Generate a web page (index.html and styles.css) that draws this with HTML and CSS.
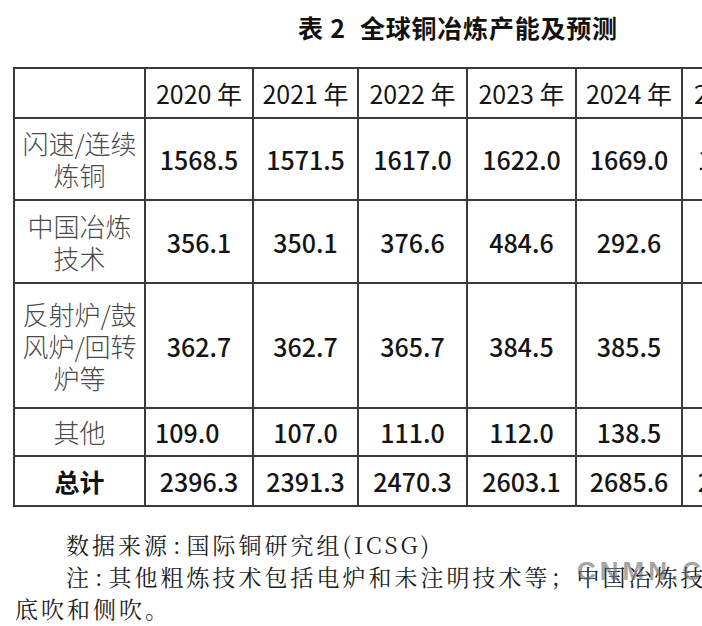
FILE: index.html
```html
<!DOCTYPE html>
<html lang="zh-CN">
<head>
<meta charset="utf-8">
<title>表 2 全球铜冶炼产能及预测</title>
<link rel="stylesheet" href="styles.css">
</head>
<body>
<div class="page">
  <h1 class="title"><span class="tno">表 2</span>全球铜冶炼产能及预测</h1>
  <table class="data">
    <colgroup>
      <col class="c-label">
      <col class="c-y1">
      <col class="c-y2">
      <col class="c-y3">
      <col class="c-y3">
      <col class="c-y4">
      <col class="c-y5">
      <col class="c-y5">
    </colgroup>
    <tr class="r-head">
      <th></th>
      <th>2020 年</th>
      <th>2021 年</th>
      <th>2022 年</th>
      <th>2023 年</th>
      <th>2024 年</th>
      <th>2025 年</th>
      <th>2026 年</th>
    </tr>
    <tr class="r-two">
      <td class="label">闪速/连续<br>炼铜</td>
      <td>1568.5</td>
      <td>1571.5</td>
      <td>1617.0</td>
      <td>1622.0</td>
      <td>1669.0</td>
      <td>1721.0</td>
      <td>1755.0</td>
    </tr>
    <tr class="r-two2">
      <td class="label">中国冶炼<br>技术</td>
      <td>356.1</td>
      <td>350.1</td>
      <td>376.6</td>
      <td>484.6</td>
      <td>292.6</td>
      <td>311.8</td>
      <td>322.4</td>
    </tr>
    <tr class="r-three">
      <td class="label">反射炉/鼓<br>风炉/回转<br>炉等</td>
      <td>362.7</td>
      <td>362.7</td>
      <td>365.7</td>
      <td>384.5</td>
      <td>385.5</td>
      <td>385.5</td>
      <td>385.5</td>
    </tr>
    <tr class="r-one">
      <td class="label">其他</td>
      <td class="left">109.0</td>
      <td>107.0</td>
      <td>111.0</td>
      <td>112.0</td>
      <td>138.5</td>
      <td>140.0</td>
      <td>141.5</td>
    </tr>
    <tr class="r-total">
      <td class="label total">总计</td>
      <td>2396.3</td>
      <td>2391.3</td>
      <td>2470.3</td>
      <td>2603.1</td>
      <td>2685.6</td>
      <td>2758.3</td>
      <td>2804.4</td>
    </tr>
  </table>
  <div class="notes">
    <p class="note">数据来源<span class="colon">:</span>国际铜研究组(ICSG)</p>
    <p class="note">注<span class="colon">:</span>其他粗炼技术包括电炉和未注明技术等；中国冶炼技术包括<br>底吹和侧吹。</p>
    <span class="mark">CNMN.COM</span>
  </div>
</div>
</body>
</html>
```

FILE: styles.css
```css
html, body {
  margin: 0;
  padding: 0;
  background: #ffffff;
  overflow: hidden;
}

body {
  width: 702px;
  height: 626px;
  font-family: "Noto Sans CJK SC", "Noto Sans", sans-serif;
  color: #111111;
}

.page {
  width: 890px;
  padding: 10px 0 0 13px;
}

.title {
  margin: 0;
  height: 34px;
  line-height: 34px;
  font-size: 25px;
  font-weight: 700;
  letter-spacing: 0.8px;
  text-align: center;
  color: #111111;
}

.tno {
  margin-right: 14px;
}

.data {
  margin-top: 23px;
  border-collapse: collapse;
  table-layout: fixed;
  width: 888px;
  font-size: 25px;
  line-height: 32px;
}

.c-label { width: 131px; }
.c-y1 { width: 108px; }
.c-y2 { width: 105px; }
.c-y3 { width: 109px; }
.c-y4 { width: 106px; }
.c-y5 { width: 110px; }

.data th,
.data td {
  border: 2px solid #3a3a3a;
  padding: 0;
  text-align: center;
  vertical-align: middle;
  white-space: nowrap;
  font-weight: 500;
  color: #141414;
}

.data th {
  font-weight: 400;
}

.data td.left {
  text-align: left;
  padding-left: 9px;
}

.r-head th { height: 48px; }
.r-two td { height: 80px; }
.r-two2 td { height: 81px; }
.r-three td { height: 123px; }
.r-one td { height: 46px; }
.r-total td { height: 48px; }

.data td.label {
  font-size: 26px;
  color: #4a4a4a;
  font-weight: 300;
}

.data td.total {
  font-size: 25px;
  color: #111111;
  font-weight: 700;
}

.notes {
  position: relative;
  margin-top: 22px;
  padding-left: 2px;
  font-family: "Noto Serif CJK SC", "Noto Sans CJK SC", serif;
  font-size: 23px;
  line-height: 32px;
  letter-spacing: 3px;
  color: #1e1e1e;
}

.note {
  margin: 0;
  text-indent: 51px;
  white-space: nowrap;
}

.colon {
  margin: 0 3px;
}

.mark {
  position: absolute;
  left: 564px;
  top: 29px;
  font-family: "Liberation Sans", sans-serif;
  font-size: 26px;
  line-height: 26px;
  font-weight: 700;
  letter-spacing: 4px;
  color: rgba(105, 105, 105, 0.62);
}
```
